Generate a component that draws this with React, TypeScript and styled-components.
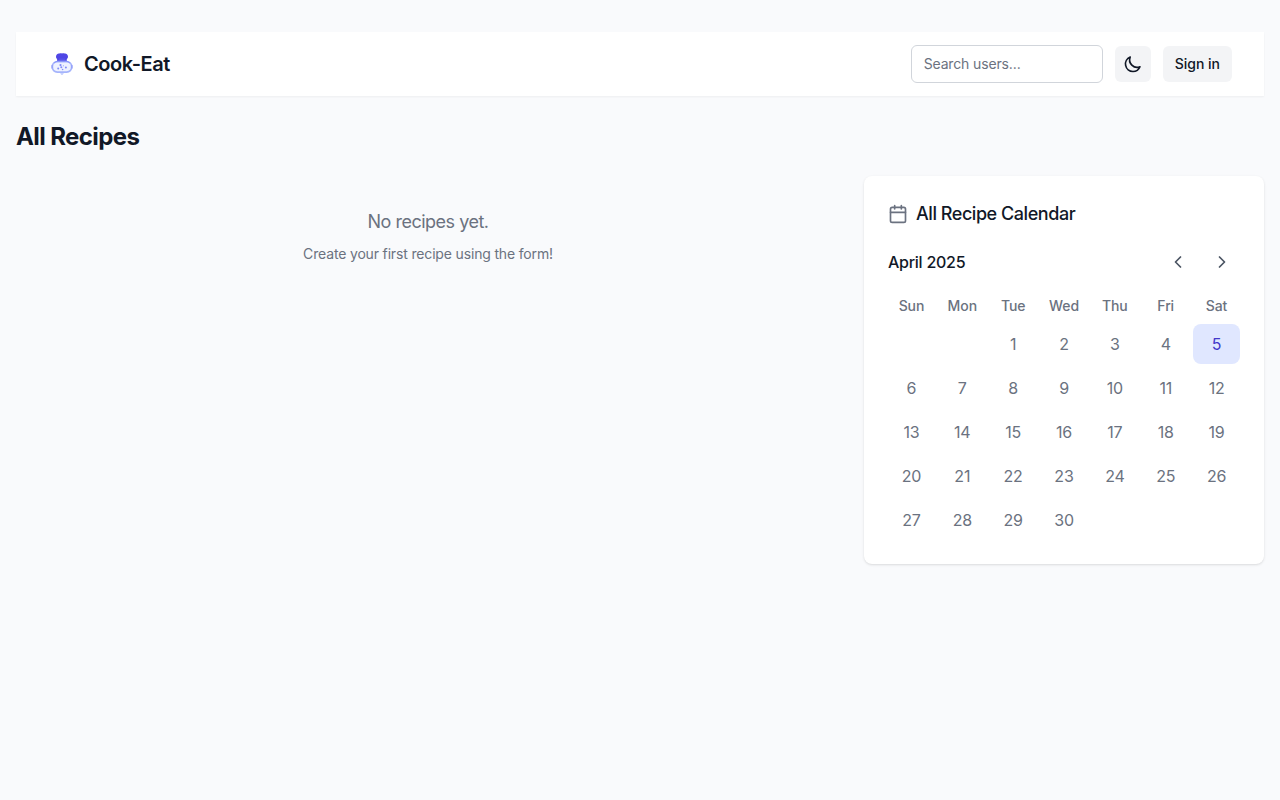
import React from "react";
import styled, { createGlobalStyle } from "styled-components";
import { Calendar, ChevronLeft, ChevronRight } from "lucide-react";

const GlobalStyle = createGlobalStyle`
  *, *::before, *::after { box-sizing: border-box; }
  body {
    margin: 0;
    background: #f9fafc;
    color: #111827;
    font-family: Inter, "Liberation Sans", sans-serif;
    font-size: 16px;
    line-height: 24px;
    -webkit-font-smoothing: antialiased;
  }
  h1, h2, h3, p { margin: 0; }
  button, input { font-family: inherit; margin: 0; }
  button { border: 0; cursor: pointer; }
  svg { display: block; flex-shrink: 0; }
`;

const Page = styled.div`
  min-height: 100vh;
  padding: 32px 16px;
`;

const Header = styled.header`
  display: flex;
  align-items: center;
  justify-content: space-between;
  height: 64px;
  padding: 0 32px;
  background: #fff;
  box-shadow: 0 1px 2px rgba(0, 0, 0, 0.05);
`;

const Brand = styled.div`
  display: flex;
  align-items: center;
  gap: 8px;
  font-size: 20px;
  line-height: 28px;
  font-weight: 600;
  letter-spacing: -0.43px;
`;

const Actions = styled.div`
  display: flex;
  align-items: center;
  gap: 12px;
`;

const SearchInput = styled.input`
  width: 192px;
  height: 38px;
  padding: 7px 12px 9px;
  border: 1px solid #d1d5db;
  border-radius: 6px;
  background: #fff;
  font-size: 14px;
  line-height: 20px;
  letter-spacing: -0.14px;
  &::placeholder { color: #6b7280; opacity: 1; }
`;

const HeaderButton = styled.button<{ $icon?: boolean }>`
  display: flex;
  align-items: center;
  justify-content: center;
  height: 36px;
  padding: ${(p) => (p.$icon ? "8px" : "8px 12px")};
  border-radius: 6px;
  background: #f3f4f6;
  color: #111827;
  font-size: 14px;
  line-height: 20px;
  font-weight: 500;
`;

const PageTitle = styled.h1`
  margin: 25px 0 23px;
  font-size: 24px;
  line-height: 32px;
  font-weight: 700;
  letter-spacing: -0.6px;
`;

const Columns = styled.main`
  display: grid;
  grid-template-columns: 1fr 400px;
  gap: 24px;
  align-items: start;
`;

const EmptyState = styled.section`
  padding: 32px 0;
  text-align: center;
  color: #6b7280;
`;

const EmptyTitle = styled.p`
  font-size: 18px;
  line-height: 28px;
  letter-spacing: -0.5px;
`;

const EmptyHint = styled.p`
  margin-top: 8px;
  font-size: 14px;
  line-height: 20px;
  letter-spacing: -0.16px;
`;

const Card = styled.section`
  padding: 24px;
  border-radius: 8px;
  background: #fff;
  box-shadow: 0 1px 3px rgba(0, 0, 0, 0.1), 0 1px 2px -1px rgba(0, 0, 0, 0.1);
`;

const CardTitle = styled.h2`
  display: flex;
  align-items: center;
  gap: 8px;
  margin-bottom: 16px;
  font-size: 18px;
  line-height: 28px;
  font-weight: 500;
  letter-spacing: -0.45px;
  svg { color: #6b7280; }
`;

const MonthBar = styled.div`
  display: flex;
  align-items: center;
  justify-content: space-between;
  margin-bottom: 16px;
`;

const MonthName = styled.h3`
  font-size: 16px;
  line-height: 24px;
  font-weight: 500;
  letter-spacing: -0.26px;
`;

const MonthNav = styled.div`
  display: flex;
  gap: 8px;
`;

const NavButton = styled.button`
  padding: 8px;
  border-radius: 6px;
  background: transparent;
  color: #4b5563;
`;

const WeekGrid = styled.div`
  display: grid;
  grid-template-columns: repeat(7, 1fr);
  gap: 4px;
`;

const Weekdays = styled(WeekGrid)`
  margin-bottom: 8px;
`;

const Weekday = styled.div`
  text-align: center;
  font-size: 14px;
  line-height: 20px;
  font-weight: 500;
  letter-spacing: -0.1px;
  color: #6b7280;
`;

const Day = styled.div<{ $today?: boolean }>`
  display: flex;
  align-items: center;
  justify-content: center;
  height: 40px;
  border-radius: 8px;
  letter-spacing: -0.2px;
  color: ${(p) => (p.$today ? "#4338ca" : "#6b7280")};
  background: ${(p) => (p.$today ? "#e0e7ff" : "transparent")};
`;

const Logo = () => (
  <svg width="28" height="28" viewBox="0 0 28 28" fill="none">
    <path
      d="M9.1 11V8.9C8.3 8.3 7.8 7.2 8.1 5.9C8.4 4.3 9.9 3.3 11.3 3.6C12.3 3 13.3 3.1 14 3.6C14.8 3 15.8 3 16.7 3.6C18.1 3.3 19.6 4.3 19.9 5.9C20.2 7.2 19.7 8.3 18.8 8.9V11Z"
      fill="#4f46e5"
    />
    <path d="M12 8.5V10.3M14 8.5V10.3M16 8.5V10.3" stroke="#818cf8" strokeWidth="0.4" />
    <path d="M11.8 22.5H16.2L14.6 25H13.4Z" fill="#c7d2fe" />
    <rect x="4.3" y="11.7" width="19.4" height="10.4" rx="5" fill="#eef2ff" stroke="#a5b4fc" strokeWidth="1.8" />
    <path d="M6 13.2C7.2 11.9 8.6 11.3 10.2 11.3H17.8C19.4 11.3 20.8 11.9 22 13.2" stroke="#818cf8" strokeWidth="0.9" />
    <path d="M4 15V18.5M24 15V18.5" stroke="#818cf8" strokeWidth="0.8" />
    <g fill="#818cf8">
      <circle cx="12.5" cy="15.1" r="1.1" />
      <circle cx="10.2" cy="18.4" r="1" />
      <circle cx="13.3" cy="17.3" r="1" />
      <circle cx="17.9" cy="17.4" r="1" />
      <circle cx="14.6" cy="19.5" r="0.8" />
      <circle cx="15.4" cy="15.8" r="0.5" />
    </g>
  </svg>
);

const MoonIcon = () => (
  <svg width="20" height="20" viewBox="0 0 24 24" fill="none" stroke="currentColor" strokeWidth="2">
    <path
      strokeLinecap="round"
      strokeLinejoin="round"
      d="M20.354 15.354A9 9 0 018.646 3.646 9.003 9.003 0 0012 21a9.003 9.003 0 008.354-5.646z"
    />
  </svg>
);

const WEEKDAYS = ["Sun", "Mon", "Tue", "Wed", "Thu", "Fri", "Sat"];
const FIRST_WEEKDAY = 2;
const DAYS_IN_MONTH = 30;
const TODAY = 5;

export default function App() {
  return (
    <>
      <GlobalStyle />
      <Page>
        <Header>
          <Brand>
            <Logo />
            <span>Cook-Eat</span>
          </Brand>
          <Actions>
            <SearchInput placeholder="Search users..." />
            <HeaderButton $icon aria-label="Toggle theme">
              <MoonIcon />
            </HeaderButton>
            <HeaderButton>Sign in</HeaderButton>
          </Actions>
        </Header>
        <PageTitle>All Recipes</PageTitle>
        <Columns>
          <EmptyState>
            <EmptyTitle>No recipes yet.</EmptyTitle>
            <EmptyHint>Create your first recipe using the form!</EmptyHint>
          </EmptyState>
          <Card>
            <CardTitle>
              <Calendar size={20} />
              All Recipe Calendar
            </CardTitle>
            <MonthBar>
              <MonthName>April 2025</MonthName>
              <MonthNav>
                <NavButton aria-label="Previous month">
                  <ChevronLeft size={20} strokeWidth={2.1} />
                </NavButton>
                <NavButton aria-label="Next month">
                  <ChevronRight size={20} strokeWidth={2.1} />
                </NavButton>
              </MonthNav>
            </MonthBar>
            <Weekdays>
              {WEEKDAYS.map((name) => (
                <Weekday key={name}>{name}</Weekday>
              ))}
            </Weekdays>
            <WeekGrid>
              {Array.from({ length: FIRST_WEEKDAY }, (_, i) => (
                <Day key={`blank-${i}`} />
              ))}
              {Array.from({ length: DAYS_IN_MONTH }, (_, i) => i + 1).map((day) => (
                <Day key={day} $today={day === TODAY}>
                  {day}
                </Day>
              ))}
            </WeekGrid>
          </Card>
        </Columns>
      </Page>
    </>
  );
}
